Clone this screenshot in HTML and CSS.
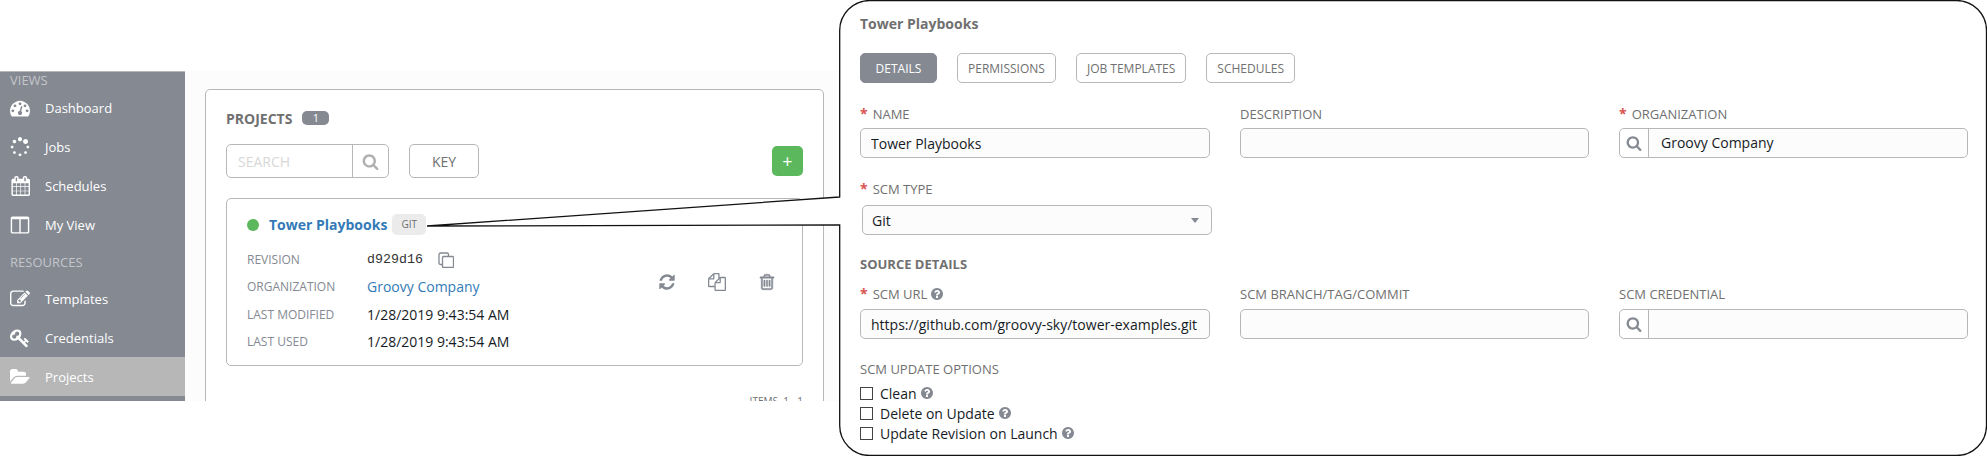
FILE: index.html
```html
<!DOCTYPE html>
<html lang="en">
<head>
<meta charset="utf-8">
<title>Tower Playbooks</title>
<link rel="stylesheet" href="styles.css">
</head>
<body>
<svg class="defs" aria-hidden="true">
  <symbol id="i-dash" viewBox="0 0 1792 1792"><path d="M384 1152q0-53-37.5-90.5t-90.5-37.5-90.5 37.5-37.5 90.5 37.5 90.5 90.5 37.5 90.5-37.5 37.5-90.5zm192-448q0-53-37.5-90.5t-90.5-37.5-90.5 37.5-37.5 90.5 37.5 90.5 90.5 37.5 90.5-37.5 37.5-90.5zm428 481l101-382q6-26-7.5-48.5t-38.5-29.5-48 6.5-30 39.5l-101 382q-60 5-107 43.5t-63 98.5q-20 77 20 146t117 89 146-20 89-117q16-60-6-117t-72-91zm660-33q0-53-37.5-90.5t-90.5-37.5-90.5 37.5-37.5 90.5 37.5 90.5 90.5 37.5 90.5-37.5 37.5-90.5zm-640-640q0-53-37.5-90.5t-90.5-37.5-90.5 37.5-37.5 90.5 37.5 90.5 90.5 37.5 90.5-37.5 37.5-90.5zm448 192q0-53-37.5-90.5t-90.5-37.5-90.5 37.5-37.5 90.5 37.5 90.5 90.5 37.5 90.5-37.5 37.5-90.5zm320 448q0 261-141 483-19 29-54 29h-1402q-35 0-54-29-141-221-141-483 0-182 71-348t191-286 286-191 348-71 348 71 286 191 191 286 71 348z"/></symbol>
  <symbol id="i-spin" viewBox="0 0 1792 1792"><path d="M526 1394q0 53-37.5 90.5t-90.5 37.5q-52 0-90-38t-38-90q0-53 37.5-90.5t90.5-37.5 90.5 37.5 37.5 90.5zm498 206q0 53-37.5 90.5t-90.5 37.5-90.5-37.5-37.5-90.5 37.5-90.5 90.5-37.5 90.5 37.5 37.5 90.5zm-704-704q0 53-37.5 90.5t-90.5 37.5-90.5-37.5-37.5-90.5 37.5-90.5 90.5-37.5 90.5 37.5 37.5 90.5zm1202 498q0 52-38 90t-90 38q-53 0-90.5-37.5t-37.5-90.5 37.5-90.5 90.5-37.5 90.5 37.5 37.5 90.5zm-964-996q0 66-47 113t-113 47-113-47-47-113 47-113 113-47 113 47 47 113zm1170 498q0 53-37.5 90.5t-90.5 37.5-90.5-37.5-37.5-90.5 37.5-90.5 90.5-37.5 90.5 37.5 37.5 90.5zm-640-704q0 80-56 136t-136 56-136-56-56-136 56-136 136-56 136 56 56 136zm530 206q0 93-66 158.5t-158 65.5q-93 0-158.5-65.5t-65.5-158.5q0-92 65.5-158t158.5-66q92 0 158 66t66 158z"/></symbol>
  <symbol id="i-cal" viewBox="0 0 1664 1792"><path d="M192 1664h288v-288h-288v288zm352 0h320v-288h-320v288zm-352-352h288v-320h-288v320zm352 0h320v-320h-320v320zm-352-384h288v-288h-288v288zm736 736h320v-288h-320v288zm-384-736h320v-288h-320v288zm768 736h288v-288h-288v288zm-384-352h320v-320h-320v320zm-352-864v-288q0-13-9.500-22.500t-22.500-9.500h-64q-13 0-22.500 9.500t-9.500 22.500v288q0 13 9.500 22.500t22.500 9.500h64q13 0 22.500-9.500t9.500-22.500zm736 864h288v-320h-288v320zm-384-384h320v-288h-320v288zm384 0h288v-288h-288v288zm32-480v-288q0-13-9.500-22.500t-22.500-9.500h-64q-13 0-22.500 9.500t-9.500 22.500v288q0 13 9.500 22.500t22.500 9.500h64q13 0 22.500-9.500t9.500-22.500zm384-64v1280q0 52-38 90t-90 38h-1408q-52 0-90-38t-38-90v-1280q0-52 38-90t90-38h128v-96q0-66 47-113t113-47h64q66 0 113 47t47 113v96h384v-96q0-66 47-113t113-47h64q66 0 113 47t47 113v96h128q52 0 90 38t38 90z"/></symbol>
  <symbol id="i-cols" viewBox="0 0 1792 1792"><path d="M224 1536h608v-1152h-640v1120q0 13 9.500 22.500t22.500 9.500zm1376-32v-1120h-640v1152h608q13 0 22.500-9.500t9.500-22.500zm128-1216v1216q0 66-47 113t-113 47h-1344q-66 0-113-47t-47-113v-1216q0-66 47-113t113-47h1344q66 0 113 47t47 113z"/></symbol>
  <symbol id="i-edit" viewBox="0 0 1792 1792"><path d="M888 1184l116-116-152-152-116 116v56h96v96h56zm440-720q-16-16-33 1l-350 350q-17 17-1 33t33-1l350-350q17-17 1-33zm80 594v190q0 119-84.500 203.500t-203.500 84.500h-832q-119 0-203.500-84.500t-84.500-203.500v-832q0-119 84.500-203.500t203.500-84.500h832q63 0 117 25 15 7 18 23 3 17-9 29l-49 49q-14 14-32 8-23-6-45-6h-832q-66 0-113 47t-47 113v832q0 66 47 113t113 47h832q66 0 113-47t47-113v-126q0-13 9-22l64-64q15-15 35-7t20 29zm-96-738l288 288-672 672h-288v-288zm444 132l-92 92-288-288 92-92q28-28 68-28t68 28l152 152q28 28 28 68t-28 68z"/></symbol>
  <symbol id="i-key" viewBox="0 0 1792 1792"><path d="M832 512q0-80-56-136t-136-56-136 56-56 136q0 42 19 83-41-19-83-19-80 0-136 56t-56 136 56 136 136 56 136-56 56-136q0-42-19-83 41 19 83 19 80 0 136-56t56-136zm851 704q0 17-49 66t-66 49q-9 0-28.500-16t-36.500-33-38.500-40-24.500-26l-96 96 220 220q28 28 28 68 0 42-39 81t-81 39q-40 0-68-28l-671-671q-176 131-365 131-163 0-265.500-102.500t-102.500-265.500q0-160 95-313t248-248 313-95q163 0 265.500 102.500t102.500 265.500q0 189-131 365l355 355 96-96q-3-3-26-24.500t-40-38.500-33-36.500-16-28.500q0-17 49-66t66-49q13 0 23 10 6 6 46 44.500t82 79.500 86.500 86 73 78 28.500 41z"/></symbol>
  <symbol id="i-folder" viewBox="0 0 1920 1792"><path d="M1879 952q0 31-31 66l-336 396q-43 51-120.500 86.500t-143.500 35.500h-1088q-34 0-60.500-13t-26.500-43q0-31 31-66l336-396q43-51 120.500-86.500t143.500-35.500h1088q34 0 60.500 13t26.500 43zm-343-344v160h-832q-94 0-197 47.500t-164 119.500l-337 396-5 6q0-4-.5-12.500t-.5-12.500v-960q0-92 66-158t158-66h320q92 0 158 66t66 158v32h544q92 0 158 66t66 158z"/></symbol>
  <symbol id="i-search" viewBox="0 0 1792 1792"><path d="M1216 832q0-185-131.500-316.500t-316.500-131.500-316.500 131.500-131.500 316.500 131.500 316.500 316.500 131.500 316.500-131.500 131.500-316.500zm512 832q0 52-38 90t-90 38q-54 0-90-38l-343-342q-179 124-399 124-143 0-273.500-55.500t-225-150-150-225-55.500-273.500 55.500-273.500 150-225 225-150 273.500-55.500 273.500 55.500 225 150 150 225 55.500 273.500q0 220-124 399l343 343q37 37 37 90z"/></symbol>
  <symbol id="i-refresh" viewBox="0 0 1792 1792"><path d="M1639 1056q0 5-1 7-64 268-268 434.500t-478 166.500q-146 0-282.500-55t-243.500-157l-129 129q-19 19-45 19t-45-19-19-45v-448q0-26 19-45t45-19h448q26 0 45 19t19 45-19 45l-137 137q71 66 161 102t187 36q134 0 250-65t186-179q11-17 53-117 8-23 30-23h192q13 0 22.500 9.500t9.500 22.500zm25-800v448q0 26-19 45t-45 19h-448q-26 0-45-19t-19-45 19-45l138-138q-148-137-349-137-134 0-250 65t-186 179q-11 17-53 117-8 23-30 23h-199q-13 0-22.500-9.500t-9.500-22.500v-7q65-268 270-434.500t480-166.500q146 0 284 55.500t245 156.500l130-129q19-19 45-19t45 19 19 45z"/></symbol>
  <symbol id="i-files" viewBox="0 0 1792 1792"><path d="M1696 384q40 0 68 28t28 68v1216q0 40-28 68t-68 28h-960q-40 0-68-28t-28-68v-288h-544q-40 0-68-28t-28-68v-672q0-40 20-88t48-76l408-408q28-28 76-48t88-20h416q40 0 68 28t28 68v328q68-40 128-40h416zm-544 213l-299 299h299v-299zm-640-384l-299 299h299v-299zm196 647l316-316v-416h-384v416q0 40-28 68t-68 28h-416v640h512v-256q0-40 20-88t48-76zm956 804v-1152h-384v416q0 40-28 68t-68 28h-416v640h896z"/></symbol>
  <symbol id="i-trash" viewBox="0 0 1408 1792"><path d="M512 736v576q0 14-9 23t-23 9h-64q-14 0-23-9t-9-23v-576q0-14 9-23t23-9h64q14 0 23 9t9 23zm256 0v576q0 14-9 23t-23 9h-64q-14 0-23-9t-9-23v-576q0-14 9-23t23-9h64q14 0 23 9t9 23zm256 0v576q0 14-9 23t-23 9h-64q-14 0-23-9t-9-23v-576q0-14 9-23t23-9h64q14 0 23 9t9 23zm128 724v-948h-896v948q0 22 7 40.500t14.500 27 10.500 8.500h832q3 0 10.500-8.500t14.500-27 7-40.500zm-672-1076h448l-48-117q-7-9-17-11h-317q-10 2-17 11zm928 32v64q0 14-9 23t-23 9h-96v948q0 83-47 143.500t-113 60.500h-832q-66 0-113-58.500t-47-141.500v-952h-96q-14 0-23-9t-9-23v-64q0-14 9-23t23-9h309l70-167q15-37 54-63t79-26h320q40 0 79 26t54 63l70 167h309q14 0 23 9t9 23z"/></symbol>
  <symbol id="i-help" viewBox="0 0 1536 1536"><path transform="translate(-128 -128)" d="M1024 1376v-192q0-14-9-23t-23-9h-192q-14 0-23 9t-9 23v192q0 14 9 23t23 9h192q14 0 23-9t9-23zm256-672q0-88-55.500-163t-138.500-116-170-41q-243 0-371 213-15 24 8 42l132 100q7 6 19 6 16 0 25-12 53-68 86-92 34-24 86-24 48 0 85.500 26t37.500 59q0 38-20 61t-68 45q-63 28-115.500 86.500t-52.500 125.500v36q0 14 9 23t23 9h192q14 0 23-9t9-23q0-19 21.500-49.500t54.500-49.500q32-18 49-28.500t46-35 44.500-48 28-60.500 12.500-81zm384 192q0 209-103 385.500t-279.500 279.500-385.500 103-385.500-103-279.500-279.500-103-385.500 103-385.500 279.500-279.500 385.500-103 385.500 103 279.500 279.500 103 385.500z"/></symbol>
</svg>

<div class="page">
  <div class="app">
    <nav class="sidebar">
      <div class="nav-head nav-head-first">VIEWS</div>
      <a class="nav-item"><svg class="nav-icon"><use href="#i-dash"/></svg><span>Dashboard</span></a>
      <a class="nav-item"><svg class="nav-icon"><use href="#i-spin"/></svg><span>Jobs</span></a>
      <a class="nav-item"><svg class="nav-icon"><use href="#i-cal"/></svg><span>Schedules</span></a>
      <a class="nav-item"><svg class="nav-icon"><use href="#i-cols"/></svg><span>My View</span></a>
      <div class="nav-head">RESOURCES</div>
      <a class="nav-item"><svg class="nav-icon"><use href="#i-edit"/></svg><span>Templates</span></a>
      <a class="nav-item"><svg class="nav-icon"><use href="#i-key"/></svg><span>Credentials</span></a>
      <a class="nav-item nav-active"><svg class="nav-icon"><use href="#i-folder"/></svg><span>Projects</span></a>
    </nav>
    <main class="content">
      <section class="panel">
        <div class="panel-head"><h2 class="panel-title">PROJECTS</h2><span class="count">1</span></div>
        <div class="toolbar">
          <div class="search"><span class="search-text">SEARCH</span><span class="search-btn"><svg class="search-icon"><use href="#i-search"/></svg></span></div>
          <button class="key-btn">KEY</button>
          <button class="add-btn">+</button>
        </div>
        <article class="card">
          <div class="card-head">
            <span class="dot"></span>
            <a class="card-title">Tower Playbooks</a>
            <span class="tag">GIT</span>
          </div>
          <div class="card-body">
            <div class="rows">
              <div class="row"><span class="row-label">REVISION</span><span class="mono">d929d16</span>
                <svg class="copy" viewBox="0 0 16 16"><path d="M4 12.500H2.500a1.500 1.500 0 0 1-1.500-1.500V2.500A1.500 1.500 0 0 1 2.500 1H9a1.500 1.500 0 0 1 1.500 1.500V4"/><rect x="4.500" y="4.500" width="11" height="11" rx="1"/></svg>
              </div>
              <div class="row"><span class="row-label">ORGANIZATION</span><a class="row-link">Groovy Company</a></div>
              <div class="row"><span class="row-label">LAST MODIFIED</span><span class="row-value">1/28/2019 9:43:54 AM</span></div>
              <div class="row"><span class="row-label">LAST USED</span><span class="row-value">1/28/2019 9:43:54 AM</span></div>
            </div>
            <div class="actions">
              <svg class="action"><use href="#i-refresh"/></svg>
              <svg class="action"><use href="#i-files"/></svg>
              <svg class="action action-bold"><use href="#i-trash"/></svg>
            </div>
          </div>
        </article>
        <div class="items">ITEMS&nbsp; 1 - 1</div>
      </section>
    </main>
  </div>

  <section class="detail">
    <h1 class="detail-title">Tower Playbooks</h1>
    <div class="tabs">
      <button class="tab tab-on">DETAILS</button>
      <button class="tab">PERMISSIONS</button>
      <button class="tab">JOB TEMPLATES</button>
      <button class="tab">SCHEDULES</button>
    </div>

    <div class="form-grid first-row">
      <div class="field">
        <label class="label"><span class="req">*</span>NAME</label>
        <input class="input" value="Tower Playbooks">
      </div>
      <div class="field">
        <label class="label">DESCRIPTION</label>
        <input class="input">
      </div>
      <div class="field">
        <label class="label"><span class="req">*</span>ORGANIZATION</label>
        <div class="lookup"><span class="lookup-btn"><svg class="lookup-icon"><use href="#i-search"/></svg></span><span class="lookup-value">Groovy Company</span></div>
      </div>
    </div>

    <div class="form-grid type-row">
      <div class="field">
        <label class="label label-wide"><span class="req">*</span>SCM TYPE</label>
        <div class="select"><span>Git</span><span class="caret"></span></div>
      </div>
    </div>

    <h3 class="section">SOURCE DETAILS</h3>

    <div class="form-grid url-row">
      <div class="field">
        <label class="label"><span class="req">*</span>SCM URL <svg class="help"><use href="#i-help"/></svg></label>
        <input class="input" value="https://github.com/groovy-sky/tower-examples.git">
      </div>
      <div class="field">
        <label class="label">SCM BRANCH/TAG/COMMIT</label>
        <input class="input">
      </div>
      <div class="field">
        <label class="label">SCM CREDENTIAL</label>
        <div class="lookup"><span class="lookup-btn"><svg class="lookup-icon"><use href="#i-search"/></svg></span><span class="lookup-value"></span></div>
      </div>
    </div>

    <div class="options-title">SCM UPDATE OPTIONS</div>
    <label class="check"><input type="checkbox" class="box"><span>Clean</span><svg class="help"><use href="#i-help"/></svg></label>
    <label class="check"><input type="checkbox" class="box"><span>Delete on Update</span><svg class="help"><use href="#i-help"/></svg></label>
    <label class="check"><input type="checkbox" class="box"><span>Update Revision on Launch</span><svg class="help"><use href="#i-help"/></svg></label>
  </section>

  <svg class="callout" viewBox="0 0 1987 456" aria-hidden="true">
    <polygon class="wedge" points="427,226 841,197 841,225"/>
    <path class="outline" d="M839.700 197 L427 226 L839.700 225 V425.500 A30 30 0 0 0 869.700 455.500 H1956.500 A30 30 0 0 0 1986.500 425.500 V30.500 A30 30 0 0 0 1956.500 .500 H869.700 A30 30 0 0 0 839.700 30.500 Z"/>
  </svg>
</div>
</body>
</html>
```

FILE: styles.css
```css
* { box-sizing: border-box; }
html, body { margin: 0; padding: 0; background: #fff; }
body { font-family: "Open Sans", "Noto Sans", sans-serif; font-size: 14px; color: #161b1f; }
h1, h2, h3 { margin: 0; }
button { font-family: inherit; cursor: pointer; }

.defs { position: absolute; width: 0; height: 0; }

.page { position: relative; display: flex; align-items: flex-start; width: 1987px; height: 456px; overflow: hidden; }

/* left application */
.app { display: flex; flex: none; width: 840px; height: 330px; margin-top: 71px; overflow: hidden; background: #fcfcfc; }
.sidebar { flex: none; width: 185px; height: 100%; background: #848992; border-top: 1px solid #b7b7b7; }
.nav-head { height: 18px; padding-left: 10px; font-size: 13px; line-height: 18px; color: #c4c6ca; }
.nav-head-first { height: 16px; line-height: 16px; }
.nav-item { display: flex; align-items: center; height: 39px; color: #fff; font-size: 13px; }
.nav-icon { flex: none; width: 20px; height: 20px; margin: 0 15px 0 10px; fill: #fff; }
.nav-active { background: #b7b7b7; }
.sidebar .nav-item + .nav-head { margin-top: 9px; margin-bottom: 8px; }

.content { flex: 1; padding: 18px 16px 0 20px; }
.panel { height: 400px; padding: 18px 20px 0; background: #fff; border: 1px solid #b7b7b7; border-radius: 5px; }
.panel-head { display: flex; align-items: center; height: 20px; }
.panel-title { font-size: 14px; font-weight: 700; color: #707070; }
.count { width: 27px; height: 14px; margin-left: 10px; border-radius: 5px; background: #848992; color: #fff; font-size: 11px; line-height: 14px; text-align: center; }

.toolbar { display: flex; align-items: center; height: 34px; margin-top: 16px; }
.search { display: flex; width: 163px; height: 34px; border: 1px solid #b7b7b7; border-radius: 5px; }
.search-text { flex: 1; padding-left: 11px; font-size: 14px; line-height: 34px; color: #d7d7d7; }
.search-btn { display: flex; align-items: center; justify-content: center; width: 36px; border-left: 1px solid #b7b7b7; }
.search-icon { width: 17px; height: 17px; fill: #b0b0b0; }
.key-btn { width: 70px; height: 34px; margin-left: 20px; background: #fff; border: 1px solid #b7b7b7; border-radius: 5px; color: #707070; font-size: 14px; padding: 0; }
.add-btn { width: 31px; height: 30px; margin-left: auto; padding: 0; background: #5cb85c; border: 0; border-radius: 5px; color: #fff; font-size: 18px; line-height: 28px; }

.card { height: 168px; margin-top: 20px; padding: 15px 26px 0 20px; border: 1px solid #b7b7b7; border-radius: 5px; }
.card-head { display: flex; align-items: center; height: 21px; }
.dot { width: 12px; height: 12px; margin-right: 10px; border-radius: 50%; background: #5cb85c; }
.card-title { font-size: 14px; font-weight: 700; color: #337ab7; }
.tag { width: 34px; height: 21px; margin-left: 5px; border-radius: 5px; background: #ebebeb; color: #707070; font-size: 10px; line-height: 21px; text-align: center; }

.card-body { display: flex; justify-content: space-between; margin-top: 11px; }
.rows { display: flex; flex-direction: column; }
.row { display: flex; align-items: center; height: 27.300px; }
.row-label { flex: none; width: 120px; color: #848992; font-size: 12px; }
.row-value { color: #161b1f; font-size: 14px; }
.row-link { color: #337ab7; font-size: 14px; }
.mono { font-family: "Liberation Mono", monospace; font-size: 13.300px; color: #333; }
.copy { width: 16px; height: 16px; margin-left: 15px; fill: none; stroke: #848992; stroke-width: 1.300; }
.actions { display: flex; gap: 32px; margin-top: 27px; }
.action { width: 18px; height: 18px; fill: #848992; }
.action-bold { stroke: #848992; stroke-width: 50; }

.items { margin-top: 28px; font-size: 10px; line-height: 14px; text-align: right; color: #707070; }

/* detail bubble */
.detail { flex: none; width: 1147px; height: 456px; padding: 15px 19px 0 20px; background: #fff; }
.detail-title { font-size: 14px; font-weight: 700; line-height: 18px; color: #707070; }
.tabs { display: flex; gap: 20px; margin-top: 20px; }
.tab { height: 30px; padding: 0 10px; background: #fff; border: 1px solid #b7b7b7; border-radius: 5px; color: #707070; font-size: 12px; }
.tab-on { width: 77px; background: #848992; border-color: #848992; color: #fff; }

.form-grid { display: grid; grid-template-columns: 350px 349px 349px; column-gap: 30px; }
.first-row { margin-top: 22px; }
.type-row { margin-top: 22px; }
.url-row { margin-top: 12px; }
.field { min-width: 0; }
.label { display: block; height: 18px; margin-bottom: 6px; font-size: 13px; line-height: 18px; color: #707070; }
.first-row .label { margin-bottom: 5px; }
.label-wide { margin-bottom: 7px; }
.req { margin-right: 5px; color: #d9534f; font-size: 14px; line-height: 0; font-weight: 700; }
.input { display: block; width: 100%; height: 30px; padding: 0 10px; background: #fcfcfc; border: 1px solid #b7b7b7; border-radius: 5px; color: #161b1f; font-family: inherit; font-size: 14px; outline: none; }
.lookup { display: flex; height: 30px; background: #fcfcfc; border: 1px solid #b7b7b7; border-radius: 5px; }
.lookup-btn { display: flex; flex: none; align-items: center; justify-content: center; width: 29px; background: #fff; border-right: 1px solid #b7b7b7; border-radius: 5px 0 0 5px; }
.lookup-icon { width: 16px; height: 16px; fill: #848992; }
.lookup-value { padding-left: 12px; font-size: 14px; line-height: 28px; }
.select { display: flex; align-items: center; justify-content: space-between; width: 100%; height: 30px; margin-left: 2px; padding: 0 12px 0 9px; background: #fcfcfc; border: 1px solid #b7b7b7; border-radius: 5px; font-size: 14px; }
.caret { width: 0; height: 0; border-left: 4px solid transparent; border-right: 4px solid transparent; border-top: 5px solid #848992; }

.section { margin-top: 20px; font-size: 13px; font-weight: 700; line-height: 18px; color: #707070; }
.options-title { margin-top: 21px; font-size: 13px; line-height: 18px; color: #707070; }
.check { display: flex; align-items: center; height: 20px; font-size: 14px; color: #161b1f; }
.options-title + .check { margin-top: 5px; }
.box { appearance: none; flex: none; width: 13px; height: 13px; margin: 0 7px 0 0; background: #fff; border: 1px solid #444; border-radius: 0; }
.help { width: 12px; height: 12px; fill: #848992; vertical-align: -1px; }
.check .help { margin-left: 4px; }

/* connector + bubble outline */
.callout { position: absolute; inset: 0; width: 1987px; height: 456px; pointer-events: none; }
.wedge { fill: #fff; }
.outline { fill: none; stroke: #111; stroke-width: 1.300; }
```
